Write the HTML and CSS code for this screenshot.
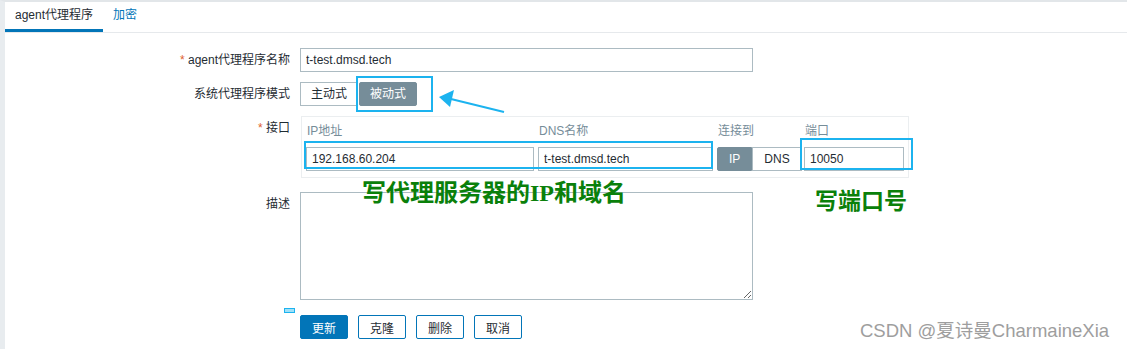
FILE: index.html
```html
<!DOCTYPE html>
<html lang="zh-CN">
<head>
    <meta charset="UTF-8">
    <meta name="viewport" content="width=device-width, initial-scale=1.0">
    <title>agent代理程序</title>
    <link rel="stylesheet" href="styles.css">
</head>
<body>
    <div class="page">
        <!-- Tabs -->
        <div class="tabs">
            <a href="#" class="tab active">agent代理程序</a>
            <a href="#" class="tab">加密</a>
        </div>

        <!-- Proxy Form -->
        <form class="form">
            <label class="label"><span class="req">*</span> agent代理程序名称</label>
            <div class="field">
                <input type="text" class="input name-input" value="t-test.dmsd.tech">
            </div>

            <label class="label">系统代理程序模式</label>
            <div class="field">
                <div class="radio-group">
                    <span class="radio">主动式</span>
                    <span class="radio selected">被动式</span>
                    <span class="mark mark-mode"></span>
                </div>
            </div>

            <label class="label"><span class="req">*</span> 接口</label>
            <div class="field">
                <div class="iface">
                    <span class="iface-head">IP地址</span>
                    <span class="iface-head">DNS名称</span>
                    <span class="iface-head">连接到</span>
                    <span class="iface-head">端口</span>
                    <input type="text" class="input" value="192.168.60.204">
                    <input type="text" class="input" value="t-test.dmsd.tech">
                    <div class="toggle">
                        <span class="toggle-item selected">IP</span>
                        <span class="toggle-item">DNS</span>
                    </div>
                    <input type="text" class="input" value="10050">
                    <span class="mark mark-addr"></span>
                    <span class="mark mark-port"></span>
                </div>
            </div>

            <label class="label">描述</label>
            <div class="field desc">
                <textarea class="textarea"></textarea>
            </div>

            <div class="label"><span class="mini"></span></div>
            <div class="field buttons">
                <button type="button" class="btn primary">更新</button>
                <button type="button" class="btn">克隆</button>
                <button type="button" class="btn">删除</button>
                <button type="button" class="btn">取消</button>
            </div>
        </form>

        <!-- Annotations -->
        <svg class="arrow" width="75" height="30" viewBox="0 0 75 30">
            <line x1="16" y1="14" x2="69" y2="27" stroke="#1cb3ef" stroke-width="2"/>
            <polygon points="4,12 19,5 15,22" fill="#1cb3ef"/>
        </svg>
        <div class="note note-addr">写代理服务器的IP和域名</div>
        <div class="note note-port">写端口号</div>
        <div class="watermark">CSDN @夏诗曼CharmaineXia</div>
    </div>
</body>
</html>
```

FILE: styles.css
```css
/* General Styles */
body, html {
    margin: 0;
    padding: 0;
    background: #fff;
    font-family: "Liberation Sans", Arial, "Noto Sans CJK SC", sans-serif;
    font-size: 12px;
    color: #1f2c33;
}

.page {
    position: relative;
    height: 349px;
    box-sizing: border-box;
    border-left: 5px solid #e8ecef;
    border-top: 2px solid #e2e6e9;
    overflow: hidden;
}

/* Tabs */
.tabs {
    display: flex;
    height: 30px;
    border-bottom: 1px solid #e6e9ec;
}

.tab {
    display: block;
    height: 27px;
    line-height: 27px;
    padding: 0 10px;
    color: #0275b8;
    text-decoration: none;
    border-bottom: 3px solid transparent;
}

.tab.active {
    color: #1f2c33;
    border-bottom-color: #0275b8;
}

/* Form */
.form {
    display: grid;
    grid-template-columns: 285px 1fr;
    column-gap: 10px;
    padding-top: 15px;
}

.label {
    text-align: right;
    padding-top: 4px;
    line-height: 16px;
    position: relative;
}

.req {
    color: #e0602d;
}

.field {
    position: relative;
    margin-bottom: 10px;
}

.field.desc {
    margin-bottom: 15px;
}

.input {
    box-sizing: border-box;
    height: 24px;
    border: 1px solid #acbbc2;
    padding: 0 5px;
    font: inherit;
    color: #1f2c33;
    background: #fff;
    margin: 0;
}

.name-input {
    width: 453px;
}

/* Agent mode */
.radio-group {
    position: relative;
    display: flex;
    height: 24px;
}

.radio {
    box-sizing: border-box;
    height: 24px;
    line-height: 22px;
    padding: 0 10px;
    border: 1px solid #acbbc2;
    background: #fff;
}

.radio.selected {
    margin-left: 1px;
    background: #768d99;
    border-color: #768d99;
    color: #fff;
    border-radius: 2px;
}

/* Interfaces */
.iface {
    position: relative;
    display: grid;
    grid-template-columns: 228px 175px 83px 100px;
    grid-template-rows: 20px 24px;
    column-gap: 4px;
    row-gap: 6px;
    width: 608px;
    height: 62px;
    box-sizing: border-box;
    border: 1px solid #ebeef0;
    padding: 4px 4px 0 4px;
    margin-left: 1px;
    margin-bottom: 4px;
}

.iface-head {
    color: #768d99;
    line-height: 20px;
    padding-left: 1px;
}

.iface .input {
    width: 100%;
}

.toggle {
    display: flex;
    height: 24px;
}

.toggle-item {
    box-sizing: border-box;
    height: 24px;
    line-height: 22px;
    padding: 0 11px;
    border: 1px solid #acbbc2;
}

.toggle-item.selected {
    background: #768d99;
    border-color: #768d99;
    color: #fff;
    border-radius: 2px 0 0 2px;
}

/* Description */
.textarea {
    display: block;
    box-sizing: border-box;
    width: 453px;
    height: 108px;
    border: 1px solid #acbbc2;
    margin: 0;
    font: inherit;
}

/* Buttons */
.buttons {
    display: flex;
    gap: 10px;
}

.btn {
    box-sizing: border-box;
    width: 48px;
    height: 24px;
    border: 1px solid #0275b8;
    border-radius: 2px;
    background: #fff;
    color: #1f2c33;
    font: inherit;
    padding: 0;
    cursor: pointer;
}

.btn.primary {
    background: #0275b8;
    color: #fff;
}

/* Annotation marks */
.mark {
    position: absolute;
    box-sizing: border-box;
    border: 2px solid #1cb3ef;
}

.mark-mode {
    left: 56px;
    top: -6px;
    width: 77px;
    height: 36px;
}

.mark-addr {
    left: 2px;
    top: 24px;
    width: 409px;
    height: 28px;
}

.mark-port {
    left: 498px;
    top: 21px;
    width: 113px;
    height: 32px;
}

.mini {
    position: absolute;
    right: -5px;
    top: -7px;
    width: 11px;
    height: 5px;
    box-sizing: border-box;
    border: 1px solid #1cb3ef;
    background: #9fe0f8;
}

.arrow {
    position: absolute;
    left: 430px;
    top: 83px;
}

.note {
    position: absolute;
    font-family: "Liberation Serif", "Noto Sans CJK SC", serif;
    font-weight: bold;
    color: #0a800a;
    line-height: 26px;
}

.note-addr {
    left: 357px;
    top: 178px;
    font-size: 24px;
}

.note-port {
    left: 810px;
    top: 187px;
    font-size: 23px;
}

.watermark {
    position: absolute;
    left: 855px;
    top: 318px;
    font-size: 18.5px;
    line-height: 22px;
    color: #9e9e9e;
    text-shadow: 0 0 1px #fff;
    white-space: nowrap;
}
```
